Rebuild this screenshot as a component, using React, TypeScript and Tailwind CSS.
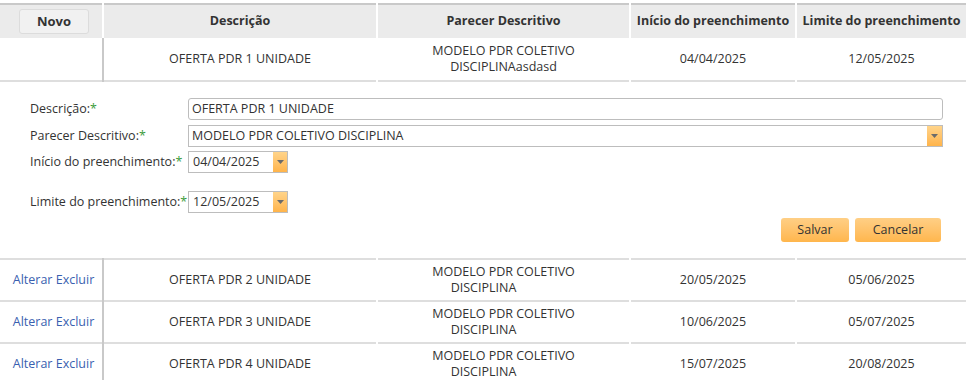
import React from "react";

type Row = { id: number; desc: string; parecer: string; tail: string; inicio: string; limite: string };

const rows: Row[] = [
  { id: 2, desc: "OFERTA PDR 2 UNIDADE", parecer: "MODELO PDR COLETIVO", tail: "DISCIPLINA", inicio: "20/05/2025", limite: "05/06/2025" },
  { id: 3, desc: "OFERTA PDR 3 UNIDADE", parecer: "MODELO PDR COLETIVO", tail: "DISCIPLINA", inicio: "10/06/2025", limite: "05/07/2025" },
  { id: 4, desc: "OFERTA PDR 4 UNIDADE", parecer: "MODELO PDR COLETIVO", tail: "DISCIPLINA", inicio: "15/07/2025", limite: "20/08/2025" },
];

// small dark caret inside the orange dropdown block
function Caret() {
  return (
    <svg width="7" height="4" viewBox="0 0 7 4">
      <path d="M0 0h7L3.5 4z" fill="#6b6b6b" />
    </svg>
  );
}

function Label({ text }: { text: string }) {
  return (
    <div className="w-[158px] shrink-0 whitespace-nowrap">
      {text}
      <span className="text-[#3c9c3c]">*</span>
    </div>
  );
}

function DateField({ value }: { value: string }) {
  return (
    <div className="flex h-[22px] w-[100px] border border-[#bdbdbd] bg-white">
      <div className="flex flex-1 items-center pl-[4px]">{value}</div>
      <div className="flex w-[14px] items-center justify-center bg-gradient-to-b from-[#ffd48a] to-[#ffb44a]">
        <Caret />
      </div>
    </div>
  );
}

export default function App() {
  return (
    <div
      className="w-[974px] h-[380px] overflow-hidden bg-white pt-[3px] text-[12.5px] text-[#333]"
      style={{ fontFamily: "'Open Sans', 'Noto Sans', sans-serif" }}
    >
      <table className="w-[966px] table-fixed border-collapse">
        <colgroup>
          <col className="w-[103px]" />
          <col className="w-[274px]" />
          <col className="w-[253px]" />
          <col className="w-[166px]" />
          <col className="w-[170px]" />
        </colgroup>
        <thead>
          <tr className="h-[34px] border-t-2 border-[#c9c9c9] bg-[#ebebeb] font-bold">
            <th className="border-r-2 border-white px-[19px] text-left">
              <div className="flex h-[25px] w-[70px] items-center justify-center rounded-[3px] border border-[#dcdcdc] bg-[#f1f1f1] text-[13px]">
                Novo
              </div>
            </th>
            <th className="border-r-2 border-white">Descrição</th>
            <th className="border-r-2 border-white">Parecer Descritivo</th>
            <th className="border-r-2 border-white whitespace-nowrap">Início do preenchimento</th>
            <th className="whitespace-nowrap">Limite do preenchimento</th>
          </tr>
        </thead>
        <tbody>
          <tr className="h-[43px] border-b-2 border-[#dedede] text-center leading-[16px]">
            <td className="border-r-2 border-[#c9c9c9]" />
            <td className="border-r-2 border-white">OFERTA PDR 1 UNIDADE</td>
            <td className="border-r-2 border-white">
              MODELO PDR COLETIVO
              <br />
              DISCIPLINAasdasd
            </td>
            <td className="border-r-2 border-white">04/04/2025</td>
            <td>12/05/2025</td>
          </tr>
          <tr className="border-b-2 border-[#dedede]">
            <td colSpan={5} className="h-[178px] align-top">
              <div className="flex flex-col pl-[30px] pr-[23px] pt-[16px]">
                <div className="flex h-[22px] items-center">
                  <Label text="Descrição:" />
                  <div className="flex h-[22px] flex-1 items-center rounded-[3px] border border-[#bdbdbd] pl-[3px]">
                    OFERTA PDR 1 UNIDADE
                  </div>
                </div>
                <div className="mt-[5px] flex h-[22px] items-center">
                  <Label text="Parecer Descritivo:" />
                  <div className="flex h-[22px] flex-1 border border-[#bdbdbd]">
                    <div className="flex flex-1 items-center pl-[3px]">MODELO PDR COLETIVO DISCIPLINA</div>
                    <div className="flex w-[15px] items-center justify-center bg-gradient-to-b from-[#ffd48a] to-[#ffb44a]">
                      <Caret />
                    </div>
                  </div>
                </div>
                <div className="mt-[4px] flex h-[22px] items-center">
                  <Label text="Início do preenchimento:" />
                  <DateField value="04/04/2025" />
                </div>
                <div className="mt-[18px] flex h-[22px] items-center">
                  <Label text="Limite do preenchimento:" />
                  <DateField value="12/05/2025" />
                </div>
                <div className="mt-[5px] flex justify-end gap-[6px] pr-[2px]">
                  <button className="h-[24px] w-[68px] rounded-[3px] bg-gradient-to-b from-[#ffcf85] to-[#ffb64c]">
                    Salvar
                  </button>
                  <button className="h-[24px] w-[86px] rounded-[3px] bg-gradient-to-b from-[#ffcf85] to-[#ffb64c]">
                    Cancelar
                  </button>
                </div>
              </div>
            </td>
          </tr>
          {rows.map((r) => (
            <tr key={r.id} className="h-[42px] border-b-2 border-[#dedede] text-center leading-[16px]">
              <td className="border-r-2 border-[#c9c9c9] pl-[5px] text-[#3a5fb0]">
                <a className="cursor-pointer">Alterar</a> <a className="cursor-pointer">Excluir</a>
              </td>
              <td className="border-r-2 border-white">{r.desc}</td>
              <td className="border-r-2 border-white">
                {r.parecer}
                <br />
                {r.tail}
                <span className="inline-block w-[40px]" />
              </td>
              <td className="border-r-2 border-white">{r.inicio}</td>
              <td>{r.limite}</td>
            </tr>
          ))}
        </tbody>
      </table>
    </div>
  );
}
